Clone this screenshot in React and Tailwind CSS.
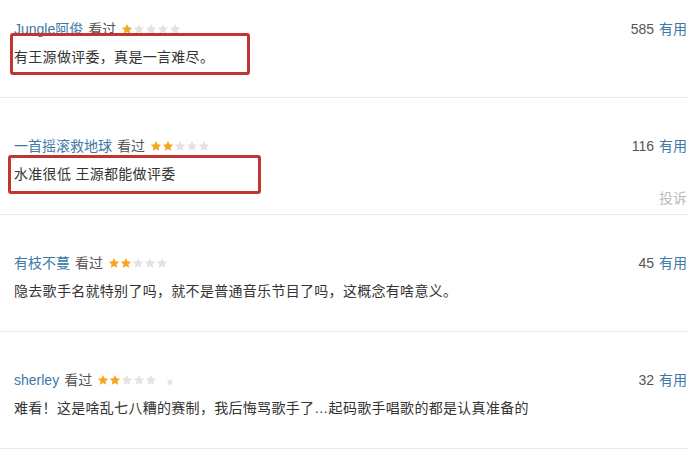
import React from 'react';

const reviews = [
  { name: 'Jungle阿俊', stars: 1, text: '有王源做评委，真是一言难尽。', votes: 585 },
  { name: '一首摇滚救地球', stars: 2, text: '水准很低 王源都能做评委', votes: 116, report: true },
  { name: '有枝不蔓', stars: 2, text: '隐去歌手名就特别了吗，就不是普通音乐节目了吗，这概念有啥意义。', votes: 45 },
  { name: 'sherley', stars: 2, text: '难看！这是啥乱七八糟的赛制，我后悔骂歌手了…起码歌手唱歌的都是认真准备的', votes: 32, extra: true },
];

const Star = ({ on, size = 12 }) => (
  <svg width={size} height={size} viewBox="0 0 24 24">
    <path
      d="M12 1.8l3.1 6.6 7.2.9-5.3 5 1.4 7.1L12 17.9l-6.4 3.5 1.4-7.1-5.3-5 7.2-.9z"
      fill={on ? '#f5a623' : '#e3e3e3'}
    />
  </svg>
);

const Stars = ({ count }) => (
  <span className="ml-[5px] inline-flex items-center">
    {[0, 1, 2, 3, 4].map(i => (
      <Star key={i} on={i < count} />
    ))}
  </span>
);

export default function App() {
  return (
    <div
      className="relative w-[699px] h-[475px] overflow-hidden bg-white text-[14px]"
      style={{ fontFamily: '"Liberation Sans", "Noto Sans CJK SC", sans-serif' }}
    >
      <div className="mr-[11px]">
        {reviews.map((r, idx) => (
          <div
            key={idx}
            className={`border-b border-[#ebebeb] pl-[14px] pr-px ${idx === 0 ? 'pt-[19px]' : 'pt-[38px]'} ${r.report ? 'pb-[6px]' : 'pb-[30px]'}`}
          >
            <div className="flex h-5 items-center justify-between leading-5">
              <div className="flex items-center">
                <span className="text-[#3d78a6]">{r.name}</span>
                <span className="ml-[5px] text-[#555]">看过</span>
                <Stars count={r.stars} />
                {r.extra && (
                  <span className="ml-[9px] mt-[3px]">
                    <Star on={false} size={8} />
                  </span>
                )}
              </div>
              <div>
                <span className="text-[#555]">{r.votes}</span>
                <span className="ml-[5px] text-[#3d78a6]">有用</span>
              </div>
            </div>
            <div className="mt-2 h-5 leading-5 tracking-[0.3px] text-[#333]">{r.text}</div>
            {r.report && (
              <div className="mt-1 h-5 text-right leading-5 text-[#bbbbbb]">投诉</div>
            )}
          </div>
        ))}
      </div>

      {/* red highlight boxes */}
      <div className="absolute left-[10px] top-[33px] h-[42px] w-[240px] rounded-[3px] border-[3px] border-[#c0352f]" />
      <div className="absolute left-[8px] top-[155px] h-[39px] w-[253px] rounded-[3px] border-[3px] border-[#c0352f]" />
    </div>
  );
}
